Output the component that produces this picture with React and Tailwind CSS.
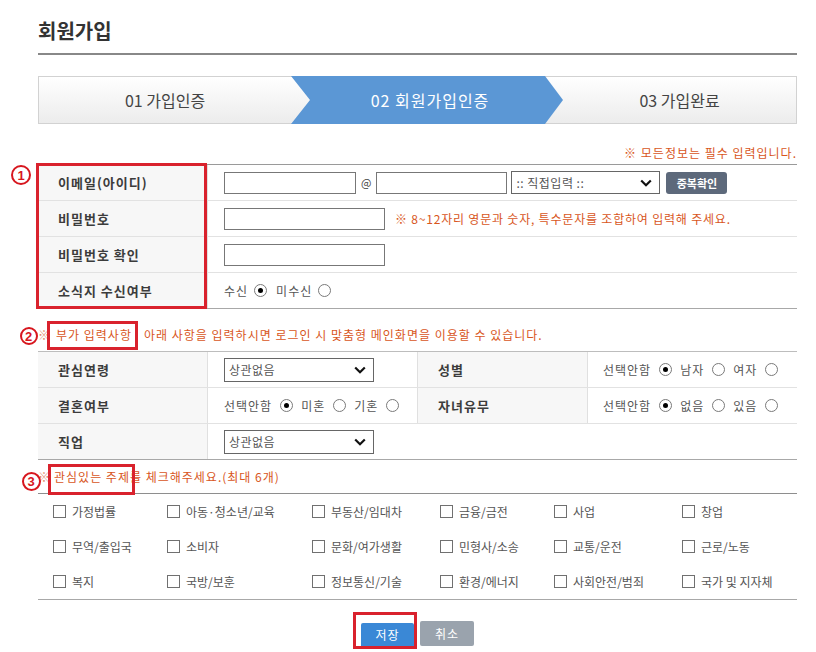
import React from "react";

function Radio({ checked }) {
  return (
    <span className="inline-flex w-[13px] h-[13px] rounded-full border border-[#7a7a7a] bg-white items-center justify-center shrink-0">
      {checked ? <span className="w-[5px] h-[5px] rounded-full bg-black" /> : null}
    </span>
  );
}

function Check({ label }) {
  return (
    <div className="flex items-center gap-[6px] text-[12px] text-[#555] leading-[16px]">
      <span className="w-[13px] h-[13px] border border-[#707070] bg-white shrink-0" />
      <span>{label}</span>
    </div>
  );
}

function Chevron() {
  return (
    <svg width="12" height="8" viewBox="0 0 12 8">
      <path d="M1.2 1.5 L6 6.2 L10.8 1.5" fill="none" stroke="#111" strokeWidth="2.2" />
    </svg>
  );
}

function Select({ className, text }) {
  return (
    <div className={className + " border border-[#666] bg-white flex items-center justify-between pl-[4px] pr-[7px] text-[12px] text-[#555] leading-[16px] tracking-[0.5px]"}>
      <span>{text}</span>
      <Chevron />
    </div>
  );
}

function Circle({ n, className }) {
  return (
    <span className={className + " absolute rounded-full border-[2.5px] border-[#d7161e] text-[#d7161e] flex items-center justify-center font-bold text-[13px] leading-none font-['Liberation_Sans',sans-serif]"}>
      {n}
    </span>
  );
}

function Label({ children, className = "" }) {
  return (
    <div className={"bg-[#f7f7f7] flex items-center pl-[20px] font-bold text-[13px] text-[#3c3c3c] tracking-[1px] " + className}>
      {children}
    </div>
  );
}

export default function App() {
  const topics = [
    "가정법률", "아동·청소년/교육", "부동산/임대차", "금융/금전", "사업", "창업",
    "무역/출입국", "소비자", "문화/여가생활", "민형사/소송", "교통/운전", "근로/노동",
    "복지", "국방/보훈", "정보통신/기술", "환경/에너지", "사회안전/범죄", "국가 및 지자체",
  ];
  return (
    <div className="w-[816px] h-[652px] bg-white overflow-hidden font-['Noto_Sans_CJK_KR','Noto_Sans',sans-serif] text-[#555]">
      <div className="ml-[38px] w-[759px]">
        {/* title */}
        <div className="pt-[17px] pb-[8px] border-b-2 border-[#888] text-[20px] font-bold leading-[28px] text-[#333]">
          회원가입
        </div>

        {/* steps */}
        <div className="mt-[21px] h-[48px] flex border border-[#d2d2d2] bg-linear-to-b from-white to-[#ececec] text-[16px] leading-[20px]">
          <div className="w-[252px] flex items-center justify-center text-[#444]">01 가입인증</div>
          <div className="w-[272px] -my-px bg-[#5b97d5] [clip-path:polygon(0_0,254px_0,100%_50%,254px_100%,0_100%,19px_50%)] flex items-center justify-center text-white tracking-[1px] pl-[6px]">
            02 회원가입인증
          </div>
          <div className="flex-1 flex items-center justify-center text-[#444]">03 가입완료</div>
        </div>

        {/* notice */}
        <div className="pt-[21px] pb-[3px] text-right text-[12px] leading-[16px] text-[#d8561c] tracking-[1px]">
          ※ 모든정보는 필수 입력입니다.
        </div>

        {/* table 1 */}
        <div className="relative border-t border-[#9a9a9a]">
          <div className="flex h-[36px] border-b border-[#e2e2e2]">
            <Label className="w-[170px] border-r border-[#e0e0e0]">이메일(아이디)</Label>
            <div className="flex-1 flex items-center pl-[16px]">
              <input readOnly className="w-[132px] h-[22px] border border-[#777] bg-white" />
              <span className="mx-[5px] text-[11px] text-[#444]">@</span>
              <input readOnly className="w-[131px] h-[22px] border border-[#777] bg-white" />
              <Select className="ml-[4px] w-[149px] h-[23px]" text=":: 직접입력 ::" />
              <button className="ml-[6px] w-[61px] h-[22px] rounded-[3px] bg-[#5d697b] text-white text-[11px] font-bold leading-[14px]">
                중복확인
              </button>
            </div>
          </div>
          <div className="flex h-[36px] border-b border-[#e2e2e2]">
            <Label className="w-[170px] border-r border-[#e0e0e0]">비밀번호</Label>
            <div className="flex-1 flex items-center pl-[16px]">
              <input readOnly type="password" className="w-[161px] h-[22px] border border-[#777] bg-white" />
              <span className="ml-[10px] text-[12px] leading-[16px] text-[#d8561c] tracking-[0.8px]">
                ※ 8~12자리 영문과 숫자, 특수문자를 조합하여 입력해 주세요.
              </span>
            </div>
          </div>
          <div className="flex h-[36px] border-b border-[#e2e2e2]">
            <Label className="w-[170px] border-r border-[#e0e0e0]">비밀번호 확인</Label>
            <div className="flex-1 flex items-center pl-[16px]">
              <input readOnly type="password" className="w-[161px] h-[22px] border border-[#777] bg-white" />
            </div>
          </div>
          <div className="flex h-[36px] border-b border-[#a8a8a8]">
            <Label className="w-[170px] border-r border-[#e0e0e0]">소식지 수신여부</Label>
            <div className="flex-1 flex items-center pl-[16px] gap-[6px] text-[12px] leading-[16px] text-[#555] tracking-[1px]">
              <span>수신</span>
              <Radio checked />
              <span className="ml-[3px]">미수신</span>
              <Radio />
            </div>
          </div>
          <div className="absolute left-[-2px] top-[-2px] w-[171px] h-[146px] border-[3px] border-[#d9222d]" />
          <Circle n="1" className="left-[-27px] top-[0px] w-[20px] h-[20px]" />
        </div>

        {/* section 2 heading */}
        <div className="relative h-[42px] pt-[18px] text-[12px] leading-[16px] text-[#d8561c] tracking-[1px]">
          <span className="text-[#e28a6a]">※</span>
          <span className="ml-[5px]">부가 입력사항</span>
          <span className="ml-[12px]">아래 사항을 입력하시면 로그인 시 맞춤형 메인화면을 이용할 수 있습니다.</span>
          <div className="absolute left-[9px] top-[12px] w-[91px] h-[29px] border-[3px] border-[#d9222d]" />
          <Circle n="2" className="left-[-18px] top-[18px] w-[18px] h-[18px]" />
        </div>

        {/* table 2 */}
        <div className="border-t border-[#bdbdbd]">
          <div className="flex h-[36px] border-b border-[#e2e2e2]">
            <Label className="w-[170px] border-r border-[#e0e0e0]">관심연령</Label>
            <div className="w-[209px] flex items-center pl-[16px]">
              <Select className="w-[150px] h-[24px]" text="상관없음" />
            </div>
            <Label className="w-[171px] border-x border-[#e0e0e0]">성별</Label>
            <div className="flex-1 flex items-center pl-[15px] gap-[8px] text-[12px] leading-[16px] tracking-[1px]">
              <span>선택안함</span>
              <Radio checked />
              <span>남자</span>
              <Radio />
              <span>여자</span>
              <Radio />
            </div>
          </div>
          <div className="flex h-[36px] border-b border-[#e2e2e2]">
            <Label className="w-[170px] border-r border-[#e0e0e0]">결혼여부</Label>
            <div className="w-[209px] flex items-center pl-[16px] gap-[8px] text-[12px] leading-[16px] tracking-[1px]">
              <span>선택안함</span>
              <Radio checked />
              <span>미혼</span>
              <Radio />
              <span>기혼</span>
              <Radio />
            </div>
            <Label className="w-[171px] border-x border-[#e0e0e0]">자녀유무</Label>
            <div className="flex-1 flex items-center pl-[15px] gap-[8px] text-[12px] leading-[16px] tracking-[1px]">
              <span>선택안함</span>
              <Radio checked />
              <span>없음</span>
              <Radio />
              <span>있음</span>
              <Radio />
            </div>
          </div>
          <div className="flex h-[36px] border-b border-[#a8a8a8]">
            <Label className="w-[170px] border-r border-[#e0e0e0]">직업</Label>
            <div className="flex-1 flex items-center pl-[16px]">
              <Select className="w-[150px] h-[24px]" text="상관없음" />
            </div>
          </div>
        </div>

        {/* section 3 heading */}
        <div className="relative h-[34px] pt-[9px] border-b border-[#8e8e8e] text-[12px] leading-[16px] text-[#d8561c] tracking-[1px]">
          <span className="text-[#e28a6a]">※</span>
          <span className="ml-[3px]">관심있는 주제를 체크해주세요.(최대 6개)</span>
          <div className="absolute left-[10px] top-[4px] w-[87px] h-[31px] border-[3px] border-[#d9222d]" />
          <Circle n="3" className="left-[-16px] top-[12px] w-[19px] h-[19px]" />
        </div>

        {/* topics */}
        <div className="grid grid-cols-[114px_145px_128px_114px_128px_1fr] auto-rows-[35px] items-center pl-[15px] border-b border-[#a8a8a8]">
          {topics.map((t) => (
            <Check key={t} label={t} />
          ))}
        </div>

        {/* buttons */}
        <div className="pt-[21px] flex justify-center gap-[6px]">
          <div className="relative">
            <button className="w-[53px] h-[25px] rounded-[2px] bg-[#3a88d6] text-white text-[12px] leading-[16px] tracking-[1px]">저장</button>
            <div className="absolute left-[-8px] top-[-9px] w-[64px] h-[37px] border-[3px] border-[#d9222d]" />
          </div>
          <button className="w-[54px] h-[25px] rounded-[2px] bg-[#9aa3ad] text-white text-[12px] leading-[16px] tracking-[1px]">취소</button>
        </div>
      </div>
    </div>
  );
}
